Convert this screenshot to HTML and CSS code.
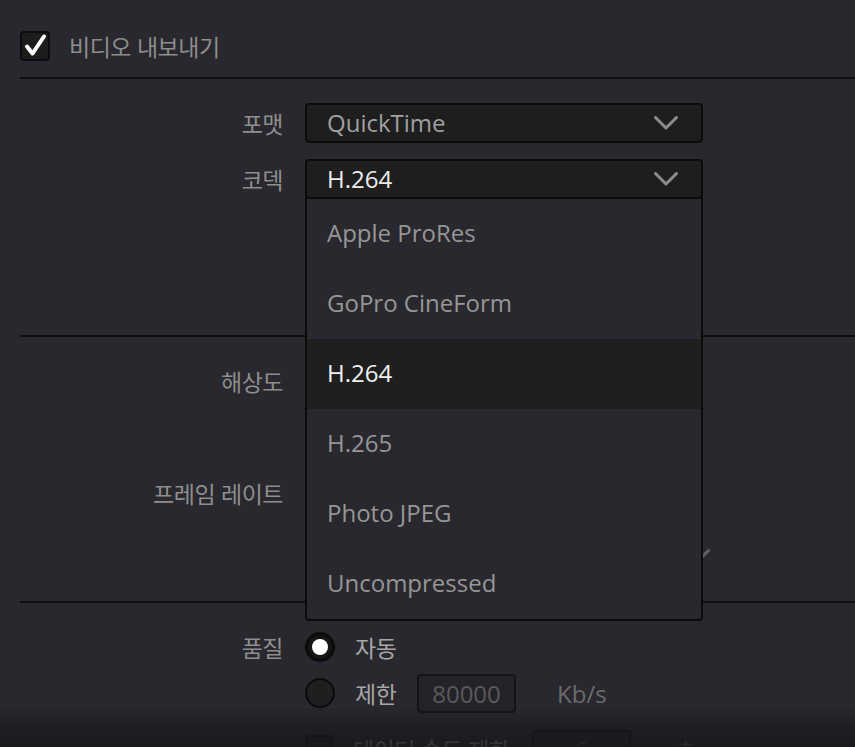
FILE: index.html
```html
<!DOCTYPE html>
<html lang="ko">
<head>
<meta charset="utf-8">
<title>비디오 내보내기</title>
<link rel="stylesheet" href="styles.css">
</head>
<body>
<div class="panel">
  <header class="head">
    <span class="check on">
      <svg width="26" height="26" viewBox="0 0 26 26"><path d="M5 13.5 L10.5 20.5 L22 3.5" fill="none" stroke="#fff" stroke-width="4" stroke-linecap="round" stroke-linejoin="round"/></svg>
    </span>
    <span class="title ko">비디오 내보내기</span>
  </header>

  <section class="sec sec-codec">
    <div class="row">
      <span class="label ko">포맷</span>
      <div class="select">
        <span class="val">QuickTime</span>
        <svg class="chev" width="26" height="16" viewBox="0 0 26 16"><path d="M2.5 2.5 L13 13 L23.5 2.5" fill="none" stroke="currentColor" stroke-width="3" stroke-linecap="round" stroke-linejoin="round"/></svg>
      </div>
    </div>
    <div class="row">
      <span class="label ko">코덱</span>
      <div class="select-wrap">
        <div class="select">
          <span class="val cur">H.264</span>
          <svg class="chev" width="26" height="16" viewBox="0 0 26 16"><path d="M2.5 2.5 L13 13 L23.5 2.5" fill="none" stroke="currentColor" stroke-width="3" stroke-linecap="round" stroke-linejoin="round"/></svg>
        </div>
        <ul class="menu">
          <li>Apple ProRes</li>
          <li>GoPro CineForm</li>
          <li class="sel">H.264</li>
          <li>H.265</li>
          <li>Photo JPEG</li>
          <li>Uncompressed</li>
        </ul>
      </div>
    </div>
  </section>

  <section class="sec sec-video">
    <div class="row"><span class="label ko">해상도</span><span></span></div>
    <div class="row"><span class="label"></span><span></span></div>
    <div class="row"><span class="label ko">프레임 레이트</span><span></span></div>
    <div class="row">
      <span class="label"></span>
      <span class="stub">
        <svg class="chev dim" width="26" height="16" viewBox="0 0 26 16"><path d="M2.5 2.5 L13 13 L23.5 2.5" fill="none" stroke="currentColor" stroke-width="3" stroke-linecap="round" stroke-linejoin="round"/></svg>
      </span>
    </div>
  </section>

  <section class="sec sec-quality">
    <div class="row r1">
      <span class="label ko">품질</span>
      <div class="opt"><span class="radio on"></span><span class="optlabel ko">자동</span></div>
    </div>
    <div class="row r2">
      <span class="label"></span>
      <div class="opt">
        <span class="radio"></span><span class="optlabel short ko">제한</span>
        <span class="field">80000</span>
        <span class="unit">Kb/s</span>
      </div>
    </div>
    <div class="row r3">
      <span class="label"></span>
      <div class="opt">
        <span class="check small"></span><span class="optlabel long ko">데이터 속도 제한</span>
        <span class="field">6</span>
        <span class="unit sec-unit ko">초</span>
      </div>
    </div>
  </section>
</div>
<div class="fade"></div>
</body>
</html>
```

FILE: styles.css
```css
* { box-sizing: border-box; }

html, body {
  margin: 0;
  padding: 0;
  height: 100%;
  overflow: hidden;
}

body {
  background: #29282e;
  font-family: "Open Sans", "Noto Sans CJK KR", sans-serif;
  font-size: 24px;
  color: #9a9a9a;
}

.ko {
  font-family: "Noto Sans CJK KR", "Open Sans", sans-serif;
  font-size: 23px;
  letter-spacing: -0.5px;
}

.panel {
  padding-left: 20px;
}

/* header */
.head {
  display: flex;
  align-items: center;
  gap: 19px;
  padding: 31px 0 16px;
  border-bottom: 2px solid #0e0e0f;
}

.check {
  width: 30px;
  height: 30px;
  border: 2px solid #0c0c0c;
  border-radius: 4px;
  background: #1c1c1c;
  display: flex;
  align-items: center;
  justify-content: center;
  flex: none;
}

.check.small {
  width: 28px;
  height: 28px;
  background: #1e1e1f;
}

.title {
  color: #8d8d8d;
  line-height: 30px;
}

/* sections */
.sec {
  border-bottom: 2px solid #0e0e0f;
}

.sec:last-child {
  border-bottom: 0;
}

.sec-codec {
  padding: 24px 0 136px;
  display: flex;
  flex-direction: column;
  gap: 16px;
}

.sec-video {
  padding: 24px 0 32px;
  display: flex;
  flex-direction: column;
  gap: 16px;
}

.sec-quality {
  padding: 27px 0 0;
  display: flex;
  flex-direction: column;
}

.row {
  display: grid;
  grid-template-columns: 263px 1fr;
  column-gap: 22px;
  align-items: center;
  height: 40px;
}

.label {
  text-align: right;
  color: #8e8e8e;
  white-space: nowrap;
}

/* select */
.select-wrap {
  position: relative;
  width: 398px;
}

.select {
  width: 398px;
  height: 40px;
  border: 2px solid #0b0b0b;
  border-radius: 4px;
  background: #1e1e1f;
  display: flex;
  align-items: center;
  justify-content: space-between;
  padding: 0 23px 1px 20px;
}

.val {
  color: #a0a0a0;
  line-height: 1;
}

.val.cur {
  color: #ececec;
}

.chev {
  color: #8c8c8c;
  display: block;
  margin-right: -1px;
}

.chev.dim {
  color: #626268;
}

/* dropdown menu */
.menu {
  position: absolute;
  z-index: 5;
  top: 39px;
  left: 0;
  width: 398px;
  margin: 0;
  padding: 0;
  list-style: none;
  background: #29282e;
  border: 2px solid #0b0b0b;
  border-top-width: 1px;
  border-radius: 0 0 4px 4px;
}

.menu li {
  height: 70px;
  display: flex;
  align-items: center;
  padding: 0 0 3px 20px;
  color: #969696;
}

.menu li.sel {
  background: #1f1f1f;
  color: #f0f0f0;
}

/* hidden chevron under menu */
.stub {
  align-self: start;
  padding-left: 380px;
  padding-top: 19px;
}

/* quality */
.r1 { height: 30px; }
.r2 { margin-top: 13px; }
.r3 { margin-top: 16px; }

.opt {
  display: flex;
  align-items: center;
}

.radio {
  width: 30px;
  height: 30px;
  border-radius: 50%;
  background: #1f1f1f;
  border: 2px solid #0b0b0b;
  display: flex;
  align-items: center;
  justify-content: center;
  flex: none;
}

.radio.on {
  border-width: 3px;
  background: #151515;
}

.radio.on::after {
  content: "";
  width: 16px;
  height: 16px;
  border-radius: 50%;
  background: #ffffff;
}

.optlabel {
  margin-left: 20px;
  color: #a6a6a6;
  white-space: nowrap;
}

.optlabel.short {
  width: 40px;
}

.optlabel.long {
  width: 157px;
  overflow: hidden;
}

.field {
  margin-left: 22px;
  width: 99px;
  height: 39px;
  border: 2px solid #141416;
  border-radius: 4px;
  background: #242329;
  color: #5a5a5c;
  display: flex;
  align-items: center;
  justify-content: center;
  flex: none;
}

.unit {
  margin-left: 41px;
  color: #6b6b6e;
}

.unit.sec-unit {
  margin-left: 44px;
}

.fade {
  position: fixed;
  left: 0;
  right: 0;
  bottom: 0;
  height: 40px;
  z-index: 20;
  pointer-events: none;
  background: linear-gradient(to bottom, rgba(24, 23, 28, 0) 0%, rgba(24, 23, 28, 0.5) 40%, rgba(24, 23, 28, 0.85) 100%);
}
```
